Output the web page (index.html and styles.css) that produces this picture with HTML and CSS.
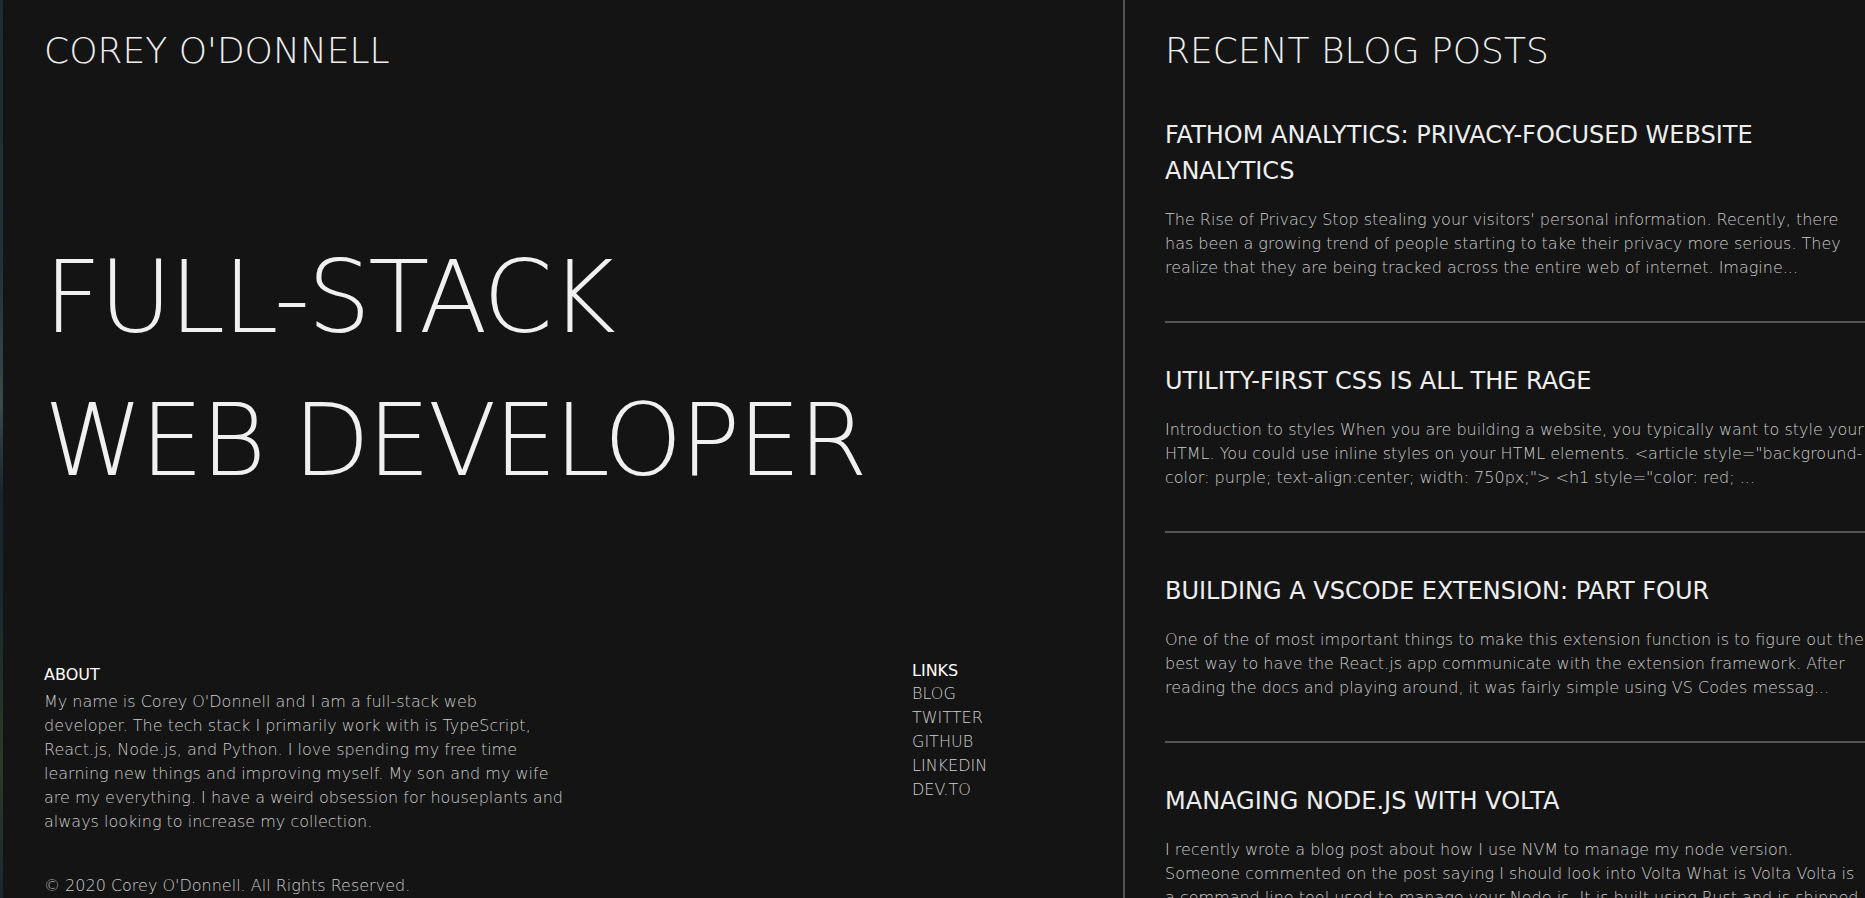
FILE: index.html
```html
<!DOCTYPE html>
<html lang="en">
<head>
<meta charset="utf-8">
<title>Corey O'Donnell</title>
<link rel="stylesheet" href="styles.css">
</head>
<body>
<div class="page">
  <div class="edge"></div>
  <aside class="intro">
    <header class="brand">COREY O'DONNELL</header>
    <h1 class="hero"><span class="hero-line">FULL-STACK</span><span class="hero-line">WEB DEVELOPER</span></h1>
    <footer class="foot">
      <div class="foot-cols">
        <section class="about">
          <h3 class="foot-title">ABOUT</h3>
          <p class="about-text">My name is Corey O'Donnell and I am a full-stack web developer. The tech stack I primarily work with is TypeScript, React.js, Node.js, and Python. I love spending my free time learning new things and improving myself. My son and my wife are my everything. I have a weird obsession for houseplants and always looking to increase my collection.</p>
        </section>
        <nav class="links">
          <h3 class="foot-title">LINKS</h3>
          <a class="link" href="#">BLOG</a>
          <a class="link" href="#">TWITTER</a>
          <a class="link" href="#">GITHUB</a>
          <a class="link" href="#">LINKEDIN</a>
          <a class="link" href="#">DEV.TO</a>
        </nav>
      </div>
      <p class="copy">© 2020 Corey O'Donnell. All Rights Reserved.</p>
    </footer>
  </aside>
  <main class="posts">
    <h2 class="posts-title">RECENT BLOG POSTS</h2>
    <article class="post">
      <h3 class="post-title">FATHOM ANALYTICS: PRIVACY-FOCUSED WEBSITE ANALYTICS</h3>
      <p class="post-text">The Rise of Privacy Stop stealing your visitors' personal information. Recently, there has been a growing trend of people starting to take their privacy more serious. They realize that they are being tracked across the entire web of internet. Imagine...</p>
    </article>
    <hr class="rule">
    <article class="post">
      <h3 class="post-title">UTILITY-FIRST CSS IS ALL THE RAGE</h3>
      <p class="post-text">Introduction to styles When you are building a website, you typically want to style your HTML. You could use inline styles on your HTML elements. &lt;article style="background-color: purple; text-align:center; width: 750px;"&gt; &lt;h1 style="color: red; ...</p>
    </article>
    <hr class="rule">
    <article class="post">
      <h3 class="post-title">BUILDING A VSCODE EXTENSION: PART FOUR</h3>
      <p class="post-text">One of the of most important things to make this extension function is to figure out the best way to have the React.js app communicate with the extension framework. After reading the docs and playing around, it was fairly simple using VS Codes messag...</p>
    </article>
    <hr class="rule">
    <article class="post">
      <h3 class="post-title">MANAGING NODE.JS WITH VOLTA</h3>
      <p class="post-text">I recently wrote a blog post about how I use NVM to manage my node version.<br>Someone commented on the post saying I should look into Volta What is Volta Volta is a command line tool used to manage your Node.js. It is built using Rust and is shipped as a static binary...</p>
    </article>
  </main>
</div>
</body>
</html>
```

FILE: styles.css
```css
html, body {
  margin: 0;
  height: 100%;
  overflow: hidden;
  background: #141414;
}

body {
  font-family: "DejaVu Sans", sans-serif;
  color: #eee;
}

.page {
  display: flex;
  height: 100vh;
}

.edge {
  flex: none;
  width: 3px;
  background: linear-gradient(180deg, #1d2c33 0%, #22323a 30%, #3b4a4a 45%, #182430 55%, #1b2a2c 70%, #2c3b27 85%, #1a2630 100%);
}

.intro {
  flex: none;
  width: 1122px;
  box-sizing: border-box;
  border-right: 2px solid #555;
  padding: 29px 0 0 41px;
  display: flex;
  flex-direction: column;
}

.brand {
  font-size: 36px;
  font-weight: 200;
  line-height: 44px;
  color: #eee;
}

.hero {
  margin: 153px 0 0;
  font-size: 100px;
  font-weight: 200;
  line-height: 143px;
  letter-spacing: -2.6px;
  color: #f0f0f0;
}

.hero-line {
  display: block;
}

.foot {
  margin-top: auto;
}

.foot-cols {
  display: flex;
}

.about {
  width: 519px;
}

.foot-title {
  margin: 2px 0 3px;
  font-size: 16px;
  font-weight: 400;
  line-height: 24px;
  color: #fff;
}

.about-text {
  margin: 0;
  font-size: 16px;
  font-weight: 200;
  line-height: 24px;
  color: #ccc;
}

.links {
  margin-left: 349px;
  margin-top: -2px;
  display: flex;
  flex-direction: column;
}

.links .foot-title {
  margin: 0 0 -1px;
}

.link {
  font-size: 16px;
  font-weight: 200;
  line-height: 24px;
  color: #d0d0d0;
  text-decoration: none;
}

.copy {
  margin: 40px 0 0;
  font-size: 16px;
  font-weight: 200;
  line-height: 24px;
  color: #ccc;
}

.posts {
  flex: none;
  width: 700px;
  padding: 29px 0 0 40px;
}

.posts-title {
  margin: 0 0 44px;
  font-size: 36px;
  font-weight: 200;
  line-height: 44px;
  color: #eee;
}

.post-title {
  margin: 0;
  font-size: 24px;
  font-weight: 400;
  line-height: 36px;
  color: #eee;
}

.post-text {
  margin: 19px 0 0;
  font-size: 16px;
  font-weight: 200;
  line-height: 24px;
  color: #ccc;
}

.rule {
  margin: 41px 0 40px;
  border: 0;
  height: 2px;
  background: #555;
}
```
